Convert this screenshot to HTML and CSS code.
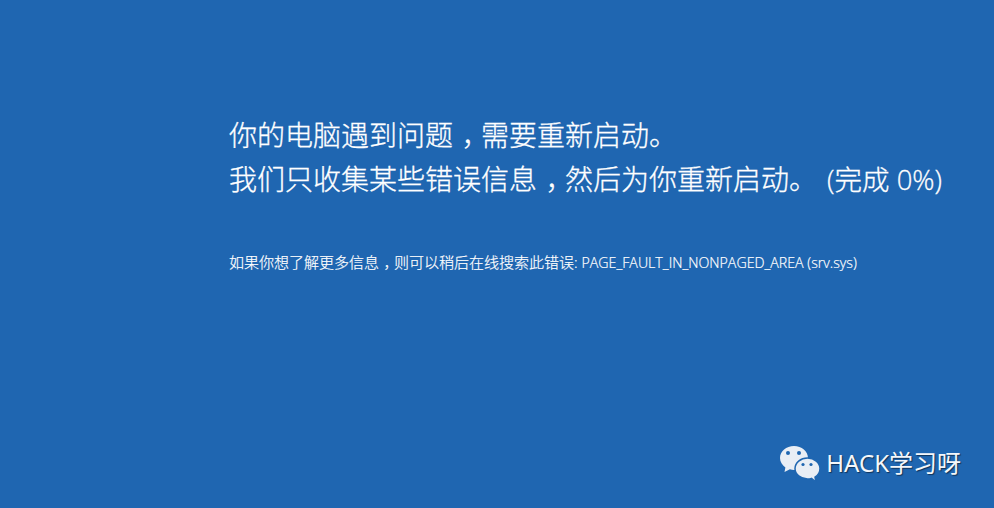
FILE: index.html
```html
<!DOCTYPE html>
<html>
<head>
    <title>Blue Screen</title>
    <link rel="stylesheet" href="styles.css">
</head>
<body>
    <div id="screen">
        <div id="message">
            <h1>你的电脑遇到问题<span class="comma">，</span>需要重新启动。</h1>
            <h1>我们只收集某些错误信息<span class="comma">，</span>然后为你重新启动。<span class="progress">(完成 0%)</span></h1>
            <p class="detail">如果你想了解更多信息<span class="comma">，</span>则可以稍后在线搜索此错误: <span class="code">PAGE_FAULT_IN_NONPAGED_AREA (srv.sys)</span></p>
        </div>
        <div id="watermark">
            <svg class="wechat" width="40" height="38" viewBox="0 -1 40 38">
                <path class="back" d="M14 1C6.300 1 0 6.400 0 13c0 3.800 2.200 7.200 5.400 9.400L4.500 27l5.400-2.700c1.300.4 2.700.6 4.100.6 7.700 0 14-5.300 14-11.900S21.700 1 14 1z"/>
                <circle class="eye" cx="8" cy="8" r="2"/>
                <circle class="eye" cx="19" cy="8" r="2"/>
                <path class="front" d="M27.500 13C20.600 13 15 17.700 15 23.500S20.600 34 27.500 34c1.400 0 2.700-.2 4-.6L36 37l-1-4.800c3-1.900 5-5 5-8.700C40 17.700 34.400 13 27.500 13z"/>
                <circle class="eye" cx="23" cy="19.500" r="1.600"/>
                <circle class="eye" cx="31" cy="19.500" r="1.600"/>
            </svg>
            <span class="account">HACK学习呀</span>
        </div>
    </div>
</body>
</html>
```

FILE: styles.css
```css
html, body {
    margin: 0;
    height: 100%;
}
body {
    background-color: #1f66b1;
    color: #fff;
    font-family: "Open Sans", "Noto Sans CJK SC", sans-serif;
    overflow: hidden;
}
#screen {
    height: 508px;
    display: flex;
    flex-direction: column;
    box-sizing: border-box;
    padding: 113px 33px 26px 229px;
}
h1 {
    margin: 0;
    height: 44px;
    font-size: 28px;
    font-weight: 300;
    line-height: 44px;
    white-space: nowrap;
    -webkit-text-stroke: 0.3px #fff;
}
.comma {
    display: inline-block;
    box-sizing: border-box;
    width: 1em;
    padding-left: 0.3em;
    line-height: 1;
    font-feature-settings: "halt";
}
.progress {
    margin-left: 10px;
    font-size: 27.500px;
    line-height: 1;
}
.detail {
    margin: 50px 0 0;
    height: 22px;
    font-size: 15px;
    font-weight: 300;
    line-height: 22px;
    white-space: nowrap;
    -webkit-text-stroke: 0.2px #fff;
}
.code {
    font-size: 14.200px;
    line-height: 1;
}
#watermark {
    margin-top: auto;
    display: flex;
    align-items: center;
    justify-content: flex-end;
    gap: 6px;
}
.account {
    font-family: "Noto Sans", "Noto Sans CJK SC", sans-serif;
    font-size: 24px;
    line-height: 36px;
    color: #f4f7fb;
    text-shadow: 1px 1px 1px rgba(0, 0, 0, 0.5);
}
.back {
    fill: #e9eef5;
}
.front {
    fill: #e9eef5;
    stroke: #1f66b1;
    stroke-width: 1.500;
}
.eye {
    fill: #1f66b1;
}
```
